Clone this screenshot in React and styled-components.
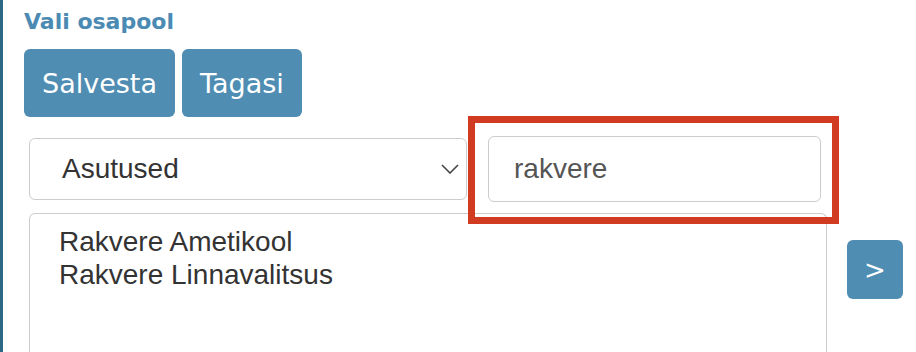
import React from 'react'
import styled, { createGlobalStyle } from 'styled-components'

const GlobalStyle = createGlobalStyle`
  html, body {
    margin: 0;
    padding: 0;
    background: #fff;
  }
  body {
    font-family: "Liberation Sans", Arial, sans-serif;
  }
`

const Page = styled.div`
  display: flex;
  height: 352px;
  overflow: hidden;
`

const SideBar = styled.div`
  width: 3px;
  flex: none;
  background: #2b6787;
`

const Main = styled.div`
  flex: 1;
  padding-left: 21px;
`

const Title = styled.h2`
  margin: 8px 0 0;
  font-family: "DejaVu Sans", Verdana, sans-serif;
  font-weight: bold;
  font-size: 22px;
  line-height: 27px;
  color: #4a8ab3;
`

const Toolbar = styled.div`
  display: flex;
  gap: 7px;
  margin-top: 14px;
`

const Button = styled.button`
  height: ${p => p.$height || 68}px;
  padding: 0 ${p => p.$pad ?? 18}px;
  border: none;
  border-radius: 6px;
  background: #4f8db3;
  color: #fff;
  font-family: "DejaVu Sans", Verdana, sans-serif;
  font-size: ${p => p.$size || 27}px;
  cursor: pointer;
`

const Workspace = styled.div`
  display: flex;
  align-items: flex-start;
  margin: 19px 0 0 5px;
`

const Column = styled.div`
  width: 798px;
  flex: none;
`

const SearchRow = styled.div`
  display: flex;
  align-items: center;
  gap: 21px;
`

const Dropdown = styled.div`
  box-sizing: border-box;
  width: 438px;
  height: 62px;
  display: flex;
  align-items: center;
  justify-content: space-between;
  padding: 0 7px 0 32px;
  border: 1px solid #ccc;
  border-radius: 6px;
  font-size: 28px;
  color: #333;
`

const SearchWrap = styled.div`
  position: relative;
`

const SearchInput = styled.input`
  box-sizing: border-box;
  display: block;
  width: 333px;
  height: 66px;
  padding: 0 0 0 25px;
  border: 1px solid #ccc;
  border-radius: 6px;
  font-family: "Liberation Sans", Arial, sans-serif;
  font-size: 28px;
  color: #555;
  outline: none;
`

const Highlight = styled.div`
  position: absolute;
  top: -20px;
  left: -20px;
  right: -18px;
  bottom: -22px;
  border: 7px solid #d13b22;
  z-index: 1;
  pointer-events: none;
`

const List = styled.div`
  box-sizing: border-box;
  margin-top: 11px;
  height: 139px;
  padding: 11px 0 0 29px;
  border: 1px solid #ccc;
  border-bottom: none;
  border-radius: 6px 6px 0 0;
`

const Option = styled.div`
  font-size: 28px;
  line-height: 33px;
  color: #333;
`

const MoveButton = styled(Button)`
  width: 56px;
  margin: 104px 0 0 20px;
`

function Chevron() {
  return (
    <svg width="18" height="10" viewBox="0 0 18 10">
      <polyline points="1,1 9,9 17,1" fill="none" stroke="#444" strokeWidth="1.6" />
    </svg>
  )
}

export default function App() {
  return (
    <Page>
      <GlobalStyle />
      <SideBar />
      <Main>
        <Title>Vali osapool</Title>
        <Toolbar>
          <Button>Salvesta</Button>
          <Button>Tagasi</Button>
        </Toolbar>
        <Workspace>
          <Column>
            <SearchRow>
              <Dropdown>
                <span>Asutused</span>
                <Chevron />
              </Dropdown>
              <SearchWrap>
                <SearchInput value="rakvere" readOnly />
                <Highlight />
              </SearchWrap>
            </SearchRow>
            <List>
              <Option>Rakvere Ametikool</Option>
              <Option>Rakvere Linnavalitsus</Option>
            </List>
          </Column>
          <MoveButton $height={59} $pad={0} $size={26}>&gt;</MoveButton>
        </Workspace>
      </Main>
    </Page>
  )
}
